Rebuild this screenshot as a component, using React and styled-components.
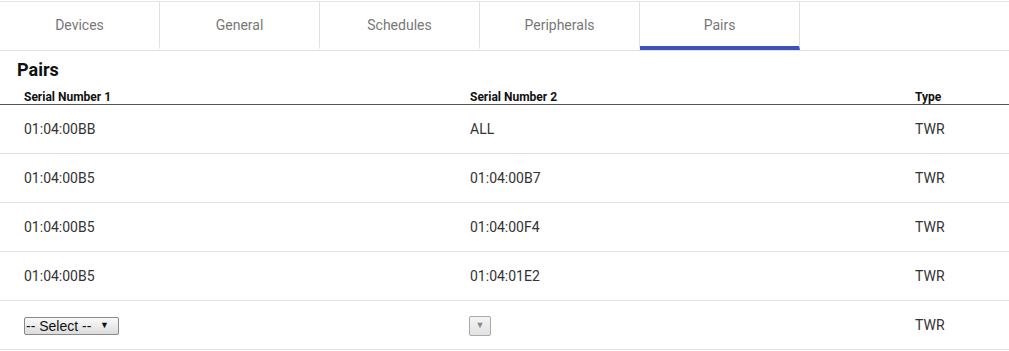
import styled, { createGlobalStyle } from "styled-components";

const GlobalStyle = createGlobalStyle`
  body {
    margin: 0;
    background: #fff;
    font-family: Roboto, "Liberation Sans", sans-serif;
  }
`;

const tabs = ["Devices", "General", "Schedules", "Peripherals", "Pairs"];

const pairs = [
  { a: "01:04:00BB", b: "ALL", type: "TWR" },
  { a: "01:04:00B5", b: "01:04:00B7", type: "TWR" },
  { a: "01:04:00B5", b: "01:04:00F4", type: "TWR" },
  { a: "01:04:00B5", b: "01:04:01E2", type: "TWR" },
];

const App = () => {
  return (
    <Page>
      <GlobalStyle />
      <TabBar>
        {tabs.map((t) => (
          <Tab key={t} active={t === "Pairs"}>
            {t}
          </Tab>
        ))}
      </TabBar>
      <Title>Pairs</Title>
      <Table>
        <HeadRow>
          <HeadCell>Serial Number 1</HeadCell>
          <HeadCell>Serial Number 2</HeadCell>
          <HeadCell>Type</HeadCell>
        </HeadRow>
        {pairs.map((p, i) => (
          <Row key={i}>
            <Cell>{p.a}</Cell>
            <Cell>{p.b}</Cell>
            <Cell>{p.type}</Cell>
          </Row>
        ))}
        <Row>
          <Cell>
            <FakeSelect>
              <span>-- Select --</span>
              <Arrow>▼</Arrow>
            </FakeSelect>
          </Cell>
          <Cell>
            <FakeSelect disabled>
              <Arrow>▼</Arrow>
            </FakeSelect>
          </Cell>
          <Cell>TWR</Cell>
        </Row>
      </Table>
    </Page>
  );
};

export default App;

const Page = styled.div`
  padding-top: 1px;
`;

const TabBar = styled.div`
  display: flex;
  border-top: 1px solid #e6e6e6;
  border-bottom: 1px solid #e0e0e0;
`;

const Tab = styled.div`
  width: 159px;
  height: 42px;
  padding-top: 2px;
  border-right: 1px solid #e0e0e0;
  border-bottom: 4px solid ${(p) => (p.active ? "#3f51b5" : "transparent")};
  display: flex;
  align-items: center;
  justify-content: center;
  font-size: 14px;
  color: #777;
`;

const Title = styled.div`
  margin: 8px 0 7px 17px;
  font-size: 18px;
  line-height: 22px;
  font-weight: 700;
  color: #111;
`;

const Table = styled.div`
  display: flex;
  flex-direction: column;
`;

const Columns = styled.div`
  display: grid;
  grid-template-columns: 446px 445px 1fr;
`;

const HeadRow = styled(Columns)`
  padding-top: 2px;
  border-bottom: 1px solid #555;
`;

const HeadCell = styled.div`
  padding-left: 24px;
  font-size: 12px;
  line-height: 14px;
  font-weight: 700;
  color: #111;
`;

const Row = styled(Columns)`
  height: 48px;
  border-bottom: 1px solid #e0e0e0;
`;

const Cell = styled.div`
  padding-left: 24px;
  display: flex;
  align-items: center;
  font-size: 14px;
  color: #333;
`;

const FakeSelect = styled.div`
  box-sizing: border-box;
  width: ${(p) => (p.disabled ? "22px" : "95px")};
  height: ${(p) => (p.disabled ? "20px" : "18px")};
  margin-left: ${(p) => (p.disabled ? "-1px" : "0")};
  margin-top: 1px;
  border: 1px solid ${(p) => (p.disabled ? "#aaa" : "#888")};
  border-radius: 2px;
  background: ${(p) =>
    p.disabled
      ? "linear-gradient(#f4f4f4, #e2e2e2)"
      : "linear-gradient(#fafafa, #dcdcdc)"};
  display: flex;
  align-items: center;
  justify-content: ${(p) => (p.disabled ? "center" : "space-between")};
  padding: 0 ${(p) => (p.disabled ? "0" : "9px")} 0 ${(p) => (p.disabled ? "0" : "1px")};
  font-family: "Liberation Sans", Arial, sans-serif;
  font-size: 14px;
  color: ${(p) => (p.disabled ? "#888" : "#111")};
`;

const Arrow = styled.span`
  font-size: 9px;
  line-height: 1;
`;
